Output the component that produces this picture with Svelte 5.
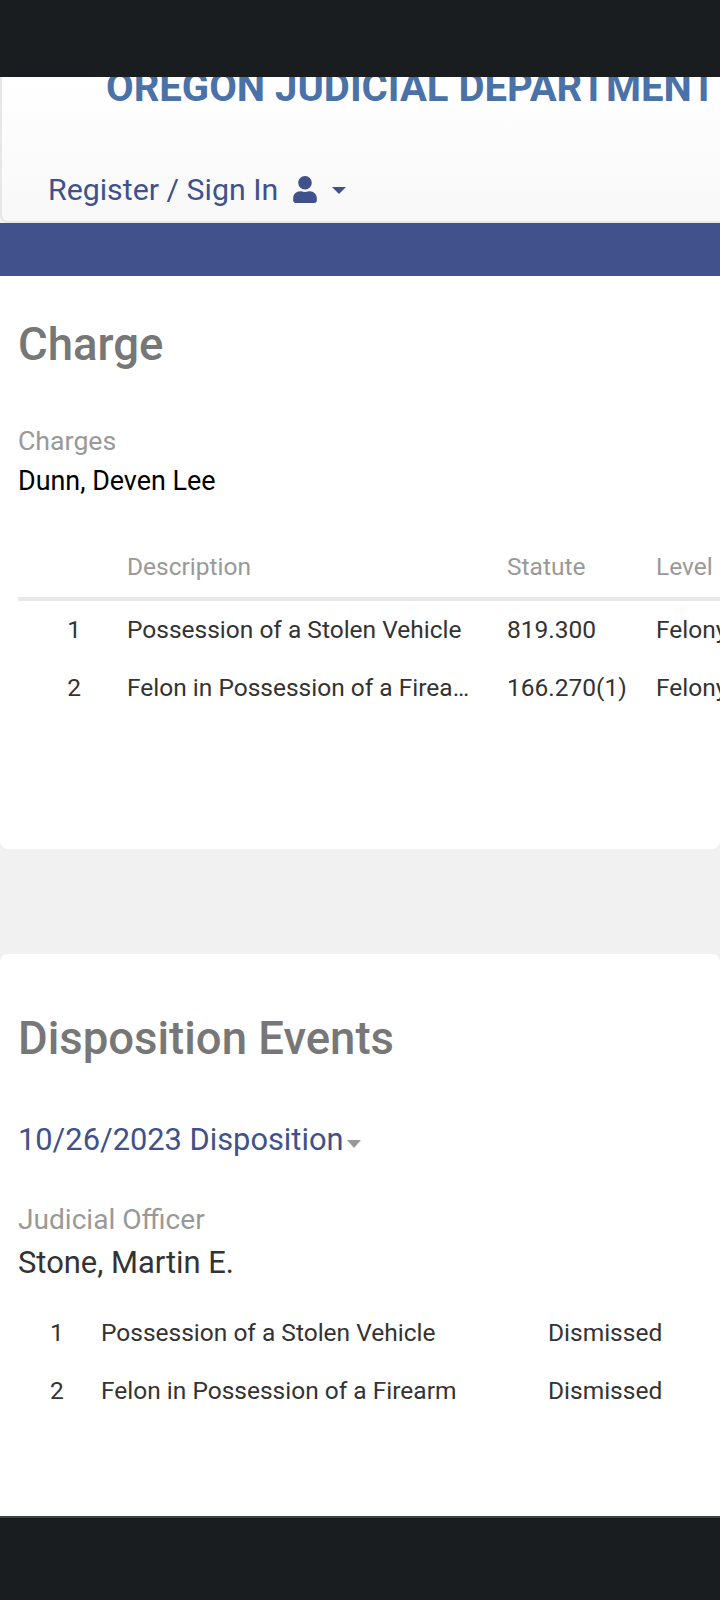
<script lang="ts">
  const charges = [
    { n: 1, desc: 'Possession of a Stolen Vehicle', statute: '819.300', level: 'Felony Class C' },
    { n: 2, desc: 'Felon in Possession of a Firearm', statute: '166.270(1)', level: 'Felony Class C' }
  ];
  const dispositions = [
    { n: 1, desc: 'Possession of a Stolen Vehicle', result: 'Dismissed' },
    { n: 2, desc: 'Felon in Possession of a Firearm', result: 'Dismissed' }
  ];
</script>

<div class="page">
  <div class="topbar"></div>

  <header class="navbar">
    <h1>OREGON JUDICIAL DEPARTMENT</h1>
    <a class="signin" href="#signin">
      <span>Register / Sign In</span>
      <svg class="user" viewBox="0 0 448 512" aria-hidden="true">
        <path d="M224 256c70.7 0 128-57.3 128-128S294.7 0 224 0 96 57.3 96 128s57.3 128 128 128zm89.6 32h-16.7c-22.2 10.2-46.9 16-72.9 16s-50.6-5.8-72.9-16h-16.7C60.2 288 0 348.2 0 422.4V464c0 26.5 21.5 48 48 48h352c26.5 0 48-21.5 48-48v-41.6c0-74.2-60.2-134.4-134.4-134.4z" />
      </svg>
      <span class="caret"></span>
    </a>
  </header>

  <div class="band"></div>

  <section class="card first">
    <h2>Charge</h2>
    <div class="label">Charges</div>
    <div class="party">Dunn, Deven Lee</div>

    <div class="table-wrap">
      <table class="charges">
        <colgroup>
          <col class="c-num" />
          <col class="c-desc" />
          <col class="c-statute" />
          <col class="c-level" />
        </colgroup>
        <thead>
          <tr>
            <th></th>
            <th>Description</th>
            <th>Statute</th>
            <th>Level</th>
          </tr>
        </thead>
        <tbody>
          {#each charges as c}
            <tr>
              <td class="num">{c.n}</td>
              <td class="desc">{c.desc}</td>
              <td>{c.statute}</td>
              <td>{c.level}</td>
            </tr>
          {/each}
        </tbody>
      </table>
    </div>
  </section>

  <section class="card second">
    <h2>Disposition Events</h2>
    <a class="event" href="#event">10/26/2023 Disposition<span class="event-caret"></span></a>
    <div class="label officer">Judicial Officer</div>
    <div class="officer-name">Stone, Martin E.</div>

    <div class="dispo">
      {#each dispositions as d}
        <div class="dispo-row">
          <span class="dispo-num">{d.n}</span>
          <span>{d.desc}</span>
          <span>{d.result}</span>
        </div>
      {/each}
    </div>
  </section>

  <footer class="footer"></footer>
</div>

<style>
  :global(body) {
    margin: 0;
    background: #f1f1f1;
    overflow-x: hidden;
  }

  .page {
    width: 720px;
    height: 1600px;
    overflow: hidden;
    font-family: Roboto, "Liberation Sans", sans-serif;
    display: flex;
    flex-direction: column;
  }

  .topbar {
    height: 77px;
    flex: none;
    background: #191d20;
  }

  .navbar {
    height: 146px;
    flex: none;
    box-sizing: border-box;
    margin-right: -10px;
    background: linear-gradient(#ffffff, #f8f8f8);
    border: 2px solid #e7e7e7;
    border-top: 0;
    border-radius: 0 0 8px 8px;
    overflow: hidden;
  }

  h1 {
    margin: -12px 0 0 104px;
    font-size: 40.1px;
    line-height: 46px;
    font-weight: 700;
    color: #4a72a8;
    white-space: nowrap;
  }

  .signin {
    display: flex;
    align-items: center;
    margin: 53px 0 0 46px;
    height: 50px;
    font-size: 30.3px;
    color: #40518b;
    text-decoration: none;
  }

  .user {
    width: 24px;
    height: 27px;
    margin-left: 15px;
    fill: #40518b;
  }

  .caret {
    width: 0;
    height: 0;
    margin-left: 15px;
    margin-top: 3px;
    border-left: 7px solid transparent;
    border-right: 7px solid transparent;
    border-top: 7px solid #40518b;
  }

  .band {
    height: 53px;
    flex: none;
    background: #40518b;
  }

  .card {
    background: #fff;
    flex: none;
    box-sizing: border-box;
    padding-left: 18px;
    overflow: hidden;
  }

  .first {
    height: 573px;
    border-radius: 0 0 8px 8px;
  }

  .second {
    height: 562px;
    margin-top: 105px;
    border-radius: 8px 8px 0 0;
  }

  h2 {
    margin: 42px 0 0;
    font-size: 45.5px;
    line-height: 54px;
    font-weight: 500;
    color: #777;
  }

  .second h2 {
    margin-top: 58px;
  }

  .label {
    font-size: 26.7px;
    line-height: 32px;
    color: #999;
  }

  .first .label {
    margin-top: 53px;
  }

  .party {
    margin-top: 4px;
    font-size: 26.9px;
    line-height: 40px;
    color: #000;
  }

  .table-wrap {
    margin-top: 36px;
    overflow: hidden;
  }

  .charges {
    width: 800px;
    table-layout: fixed;
    border-collapse: collapse;
    font-size: 24.5px;
    color: #333;
  }

  .c-num { width: 109px; }
  .c-desc { width: 380px; }
  .c-statute { width: 149px; }
  .c-level { width: 162px; }

  th {
    height: 62px;
    box-sizing: border-box;
    padding: 0 0 2px;
    text-align: left;
    font-weight: 400;
    color: #999;
    border-bottom: 4px solid #e8e8e8;
    vertical-align: middle;
  }

  td {
    height: 59px;
    padding: 0;
    box-sizing: border-box;
    white-space: nowrap;
    overflow: hidden;
  }

  .num {
    text-align: right;
    padding-right: 46px;
  }

  .desc {
    padding-right: 37px;
    text-overflow: ellipsis;
  }

  .event {
    display: block;
    margin-top: 54px;
    font-size: 30.8px;
    line-height: 40px;
    color: #40518b;
    text-decoration: none;
  }

  .event-caret {
    display: inline-block;
    margin-left: 3px;
    vertical-align: 2px;
    border-left: 7.5px solid transparent;
    border-right: 7.5px solid transparent;
    border-top: 8px solid #999;
  }

  .officer {
    margin-top: 44px;
    font-size: 28.1px;
  }

  .officer-name {
    margin-top: 7px;
    font-size: 30.9px;
    line-height: 40px;
    color: #333;
  }

  .dispo {
    margin-top: 20px;
    font-size: 24.5px;
    color: #333;
  }

  .dispo-row {
    display: grid;
    grid-template-columns: 83px 447px auto;
    height: 58px;
    align-items: center;
  }

  .dispo-num {
    padding-left: 32px;
  }

  .footer {
    flex: 1;
    box-sizing: border-box;
    background: #191d20;
    border-top: 2px solid #3c4246;
  }
</style>
